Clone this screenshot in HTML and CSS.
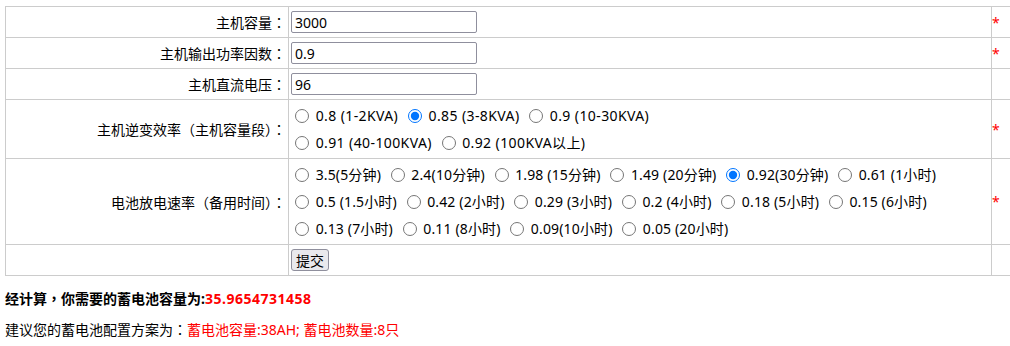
FILE: index.html
```html
<!DOCTYPE html>
<html lang="zh-cn">
<head>
    <meta charset="UTF-8">
    <meta name="viewport" content="width=device-width, initial-scale=1.0">
    <title>蓄电池容量计算</title>
    <link rel="stylesheet" href="styles.css">
</head>
<body>
    <table class="calc">
        <tr>
            <td class="label">主机容量<span class="pt" lang="zh-tw">：</span></td>
            <td class="field"><input class="txt" type="text" value="3000"></td>
            <td class="req">*</td>
        </tr>
        <tr>
            <td class="label">主机输出功率因数<span class="pt" lang="zh-tw">：</span></td>
            <td class="field"><input class="txt" type="text" value="0.9"></td>
            <td class="req">*</td>
        </tr>
        <tr>
            <td class="label">主机直流电压<span class="pt" lang="zh-tw">：</span></td>
            <td class="field"><input class="txt" type="text" value="96"></td>
            <td class="req"></td>
        </tr>
        <tr>
            <td class="label">主机逆变效率<span class="pt" lang="zh-tw">（</span>主机容量段<span class="pt" lang="zh-tw">）：</span></td>
            <td class="field opts kva">
                <div class="line">
                    <input type="radio" name="xl" id="x1"> <label for="x1">0.8 (1-2KVA)</label>
                    <input type="radio" name="xl" id="x2" checked> <label for="x2">0.85 (3-8KVA)</label>
                    <input type="radio" name="xl" id="x3"> <label for="x3">0.9 (10-30KVA)</label>
                </div>
                <div class="line">
                    <input type="radio" name="xl" id="x4"> <label for="x4">0.91 (40-100KVA)</label>
                    <input type="radio" name="xl" id="x5"> <label for="x5">0.92 (100KVA以上)</label>
                </div>
            </td>
            <td class="req">*</td>
        </tr>
        <tr>
            <td class="label">电池放电速率<span class="pt" lang="zh-tw">（</span>备用时间<span class="pt" lang="zh-tw">）：</span></td>
            <td class="field opts three">
                <div class="line">
                    <input type="radio" name="sl" id="s1"> <label for="s1">3.5(5分钟)</label>
                    <input type="radio" name="sl" id="s2"> <label for="s2">2.4(10分钟)</label>
                    <input type="radio" name="sl" id="s3"> <label for="s3">1.98 (15分钟)</label>
                    <input type="radio" name="sl" id="s4"> <label for="s4">1.49 (20分钟)</label>
                    <input type="radio" name="sl" id="s5" checked> <label for="s5">0.92(30分钟)</label>
                    <input type="radio" name="sl" id="s6"> <label for="s6">0.61 (1小时)</label>
                </div>
                <div class="line">
                    <input type="radio" name="sl" id="s7"> <label for="s7">0.5 (1.5小时)</label>
                    <input type="radio" name="sl" id="s8"> <label for="s8">0.42 (2小时)</label>
                    <input type="radio" name="sl" id="s9"> <label for="s9">0.29 (3小时)</label>
                    <input type="radio" name="sl" id="s10"> <label for="s10">0.2 (4小时)</label>
                    <input type="radio" name="sl" id="s11"> <label for="s11">0.18 (5小时)</label>
                    <input type="radio" name="sl" id="s12"> <label for="s12">0.15 (6小时)</label>
                </div>
                <div class="line">
                    <input type="radio" name="sl" id="s13"> <label for="s13">0.13 (7小时)</label>
                    <input type="radio" name="sl" id="s14"> <label for="s14">0.11 (8小时)</label>
                    <input type="radio" name="sl" id="s15"> <label for="s15">0.09(10小时)</label>
                    <input type="radio" name="sl" id="s16"> <label for="s16">0.05 (20小时)</label>
                </div>
            </td>
            <td class="req">*</td>
        </tr>
        <tr>
            <td class="label"></td>
            <td class="field"><input class="btn" type="button" value="提交"></td>
            <td class="req"></td>
        </tr>
    </table>

    <p class="result">经计算<span class="pt" lang="zh-tw">，</span>你需要的蓄电池容量为:<span class="red num">35.9654731458</span></p>
    <p class="plan">建议您的蓄电池配置方案为<span class="pt" lang="zh-tw">：</span><span class="red">蓄电池容量:38AH; 蓄电池数量:8只</span></p>
</body>
</html>
```

FILE: styles.css
```css
html {
    overflow: hidden;
}

body {
    margin: 6px 0 0 5px;
    font-family: "Noto Sans", "Noto Sans CJK SC", sans-serif;
    font-size: 14px;
    color: #000;
}

/* 全角标点居中显示 */
.pt {
    font-family: "Noto Sans CJK TC", sans-serif;
}

.calc {
    border-collapse: collapse;
    table-layout: fixed;
    width: 1030px;
}

.calc td {
    border: 1px solid #cccccc;
    padding: 2px;
    vertical-align: middle;
}

.label {
    width: 278px;
    text-align: right;
}

.field {
    width: 698px;
}

.calc .req {
    color: red;
    font-size: 14px;
    padding-left: 0;
}

.txt {
    box-sizing: border-box;
    width: 186px;
    height: 22px;
    margin: 2px 0;
    padding: 0 3px;
    font: inherit;
    border: 1px solid #8f8f9d;
    border-radius: 2px;
}

.line {
    line-height: 27px;
    height: 27px;
}

.three {
    padding-bottom: 3px;
}

.kva label {
    letter-spacing: 0.4px;
}

.three label {
    letter-spacing: 0.15px;
}

.opts input[type="radio"] {
    width: 14px;
    height: 14px;
    margin: 0 3px 0 6px;
    vertical-align: -2px;
}

.opts input[type="radio"]:first-child {
    margin-left: 4px;
}

.btn {
    box-sizing: border-box;
    height: 22px;
    margin: 2px 0;
    padding: 0 4px;
    font: inherit;
    font-family: "Noto Sans CJK SC", sans-serif;
    border: 1px solid #8f8f9d;
    border-radius: 3px;
    background: #e9e9ed;
}

.result {
    font-weight: bold;
    margin: 12px 0 11px;
}

.num {
    letter-spacing: 0.5px;
}

.plan {
    margin: 11px 0;
}

.red {
    color: red;
}
```
